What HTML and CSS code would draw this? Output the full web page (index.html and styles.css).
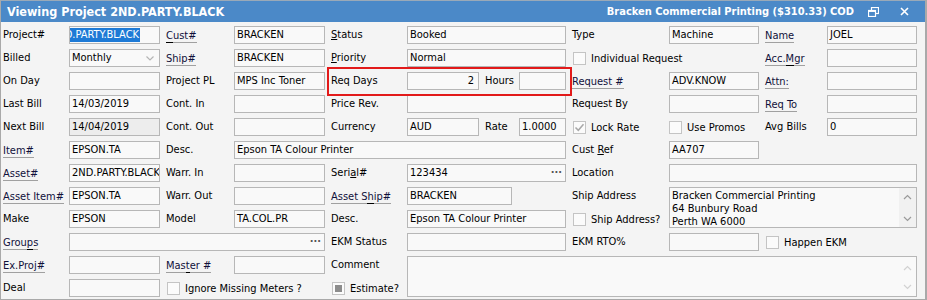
FILE: index.html
```html
<!DOCTYPE html>
<html>
<head>
<meta charset="utf-8">
<link rel="stylesheet" href="styles.css">
</head>
<body>
<div class="win">
  <div class="titlebar">
    <span class="title">Viewing Project 2ND.PARTY.BLACK</span>
    <span class="spacer"></span>
    <span class="title2">Bracken Commercial Printing ($310.33) COD</span>
    <span class="tbtn restore"><svg width="11" height="10" viewBox="0 0 11 10"><rect x="3.5" y="0.5" width="7" height="6" fill="none" stroke="#fff" stroke-width="1.2"/><rect x="0.5" y="3.5" width="7" height="6" fill="#4b89c8" stroke="#fff" stroke-width="1.2"/><line x1="0.5" y1="4.2" x2="7.5" y2="4.2" stroke="#fff" stroke-width="1.5"/></svg></span>
    <span class="tbtn close"><svg width="9" height="9" viewBox="0 0 9 9"><path d="M1 1L8 8M8 1L1 8" stroke="#fff" stroke-width="1.6"/></svg></span>
  </div>
  <div class="form">
    <!-- row 1 -->
    <div class="lb c1">Project#</div>
    <div class="f"><span class="sel">2ND.PARTY.BLACK</span></div>
    <div class="lb"><span class="lnk"><u class="ak">C</u>ust#</span></div>
    <div class="f">BRACKEN</div>
    <div class="lb"><u class="ak">S</u>tatus</div>
    <div class="f">Booked</div>
    <div class="lb">Type</div>
    <div class="f">Machine</div>
    <div class="lb"><span class="lnk">Name</span></div>
    <div class="f">JOEL</div>
    <!-- row 2 -->
    <div class="lb c1">Billed</div>
    <div class="f dd">Monthly<svg class="chev" width="8" height="5" viewBox="0 0 8 5"><path d="M0.5 0.5L4 4L7.5 0.5" fill="none" stroke="#b5b5b5" stroke-width="1.2"/></svg></div>
    <div class="lb"><span class="lnk">Ship#</span></div>
    <div class="f">BRACKEN</div>
    <div class="lb"><u class="ak">P</u>riority</div>
    <div class="f">Normal</div>
    <div class="chk s2"><span class="box"></span>Individual Request</div>
    <div class="lb"><span class="lnk">Acc.<u class="ak">M</u>gr</span></div>
    <div class="f"></div>
    <!-- row 3 -->
    <div class="lb c1">On Day</div>
    <div class="f"></div>
    <div class="lb">Project PL</div>
    <div class="f">MPS Inc Toner</div>
    <div class="lb">Req Days</div>
    <div class="combo">
      <div class="f w72 num">2</div>
      <div class="sub">Hours</div>
      <div class="f grow"></div>
    </div>
    <div class="lb"><span class="lnk">Request #</span></div>
    <div class="f">ADV.KNOW</div>
    <div class="lb"><span class="lnk">Attn:</span></div>
    <div class="f"></div>
    <!-- row 4 -->
    <div class="lb c1">Last Bill</div>
    <div class="f">14/03/2019</div>
    <div class="lb">Cont. In</div>
    <div class="f"></div>
    <div class="lb">Price Rev.</div>
    <div class="f"></div>
    <div class="lb">Request By</div>
    <div class="f"></div>
    <div class="lb"><span class="lnk">Req To</span></div>
    <div class="f"></div>
    <!-- row 5 -->
    <div class="lb c1">Next Bill</div>
    <div class="f ro">14/04/2019</div>
    <div class="lb">Cont. Out</div>
    <div class="f"></div>
    <div class="lb">Currency</div>
    <div class="combo">
      <div class="f w72">AUD</div>
      <div class="sub">Rate</div>
      <div class="f grow">1.0000</div>
    </div>
    <div class="chk"><span class="box"><svg width="11" height="11" viewBox="0 0 11 11"><path d="M1.5 5.5L4.3 8.3L9.5 2.3" fill="none" stroke="#a8a8a8" stroke-width="1.5"/></svg></span>Lock Rate</div>
    <div class="chk p0"><span class="box"></span>Use Promos</div>
    <div class="lb">Avg Bills</div>
    <div class="f">0</div>
    <!-- row 6 -->
    <div class="lb c1"><span class="lnk">Item#</span></div>
    <div class="f">EPSON.TA</div>
    <div class="lb">Desc.</div>
    <div class="f s3">Epson TA Colour Printer</div>
    <div class="lb">Cust <u class="ak">R</u>ef</div>
    <div class="f">AA707</div>
    <!-- row 7 -->
    <div class="lb c1"><span class="lnk">Asset#</span></div>
    <div class="f">2ND.PARTY.BLACK</div>
    <div class="lb">Warr. In</div>
    <div class="f"></div>
    <div class="lb">Seri<u class="ak">a</u>l#</div>
    <div class="f ell">123434<span class="dots">&middot;&middot;&middot;</span></div>
    <div class="lb">Location</div>
    <div class="f s3"></div>
    <!-- row 8 -->
    <div class="lb c1"><span class="lnk">Asset Item#</span></div>
    <div class="f">EPSON.TA</div>
    <div class="lb">Warr. Out</div>
    <div class="f"></div>
    <div class="lb"><span class="lnk">Asset S<u class="ak">h</u>ip#</span></div>
    <div class="short"><div class="f">BRACKEN</div></div>
    <div class="lb">Ship Address</div>
    <div class="f ta s3 r2">
      <div class="tatext">Bracken Commercial Printing<br>64 Bunbury Road<br>Perth WA 6000</div>
      <div class="sb">
        <svg width="9" height="6" viewBox="0 0 9 6"><path d="M1 5L4.5 1.5L8 5" fill="none" stroke="#9a9a9a" stroke-width="1.2"/></svg>
        <svg width="9" height="6" viewBox="0 0 9 6"><path d="M1 1L4.5 4.5L8 1" fill="none" stroke="#9a9a9a" stroke-width="1.2"/></svg>
      </div>
    </div>
    <!-- row 9 -->
    <div class="lb c1">Make</div>
    <div class="f">EPSON</div>
    <div class="lb">Model</div>
    <div class="f">TA.COL.PR</div>
    <div class="lb">Desc.</div>
    <div class="f">Epson TA Colour Printer</div>
    <div class="chk"><span class="box"></span>Ship Address?</div>
    <!-- row 10 -->
    <div class="lb c1"><span class="lnk">Grou<u class="ak">p</u>s</span></div>
    <div class="f s3 ell"><span class="dots">&middot;&middot;&middot;</span></div>
    <div class="lb">EKM Status</div>
    <div class="f"></div>
    <div class="lb">EKM RTO%</div>
    <div class="f"></div>
    <div class="chk s2"><span class="box"></span>Happen EKM</div>
    <!-- row 11 -->
    <div class="lb c1"><span class="lnk">Ex.Proj#</span></div>
    <div class="f"></div>
    <div class="lb"><span class="lnk">Mas<u class="ak">t</u>er #</span></div>
    <div class="f"></div>
    <div class="lb">Comment</div>
    <div class="f ta s5 r2">
      <div class="tatext"></div>
      <div class="sb dis">
        <svg width="9" height="6" viewBox="0 0 9 6"><path d="M1 5L4.5 1.5L8 5" fill="none" stroke="#d2d2d2" stroke-width="1.2"/></svg>
        <svg width="9" height="6" viewBox="0 0 9 6"><path d="M1 1L4.5 4.5L8 1" fill="none" stroke="#d2d2d2" stroke-width="1.2"/></svg>
      </div>
    </div>
    <!-- row 12 -->
    <div class="lb c1">Deal</div>
    <div class="f"></div>
    <div class="chk s2"><span class="box"></span>Ignore Missing Meters ?</div>
    <div class="chk"><span class="box ind"></span>Estimate?</div>
  </div>
  <div class="redbox"></div>
</div>
</body>
</html>
```
FILE: styles.css
```css
* { box-sizing: border-box; }
html, body { margin: 0; padding: 0; background: #ffffff; }
body {
  font-family: "DejaVu Sans Condensed", "DejaVu Sans", sans-serif;
  font-stretch: condensed;
  font-size: 11px;
  color: #000;
}
.win {
  position: relative;
  width: 927px;
  height: 300px;
  background: #f4f4f4;
  border-left: 1px solid #a9a9a9;
  border-right: 2px solid #a9a9a9;
  border-bottom: 1px solid #a9a9a9;
  overflow: hidden;
}
.titlebar {
  height: 22px;
  border-top: 1px solid #9aa9b8;
  background: #4b89c8;
  color: #fff;
  font-weight: bold;
  display: flex;
  align-items: center;
  padding-left: 6px;
  padding-right: 16px;
}
.title { font-size: 12.5px; }
.title2 { font-size: 11px; }
.spacer { flex: 1; }
.tbtn { display: flex; align-items: center; }
.restore { margin-left: 14px; }
.close { margin-left: 21px; }
.form {
  display: grid;
  grid-template-columns: 66px 91px 74px 91px 82px 159px 103px 90px 68px 90px;
  grid-auto-rows: 18px;
  row-gap: 5px;
  padding: 4px 0 0 2px;
}
.lb {
  padding-left: 6px;
  line-height: 18px;
  white-space: nowrap;
}
.c1 { grid-column-start: 1; padding-left: 0; }
.lnk {
  display: inline-block;
  line-height: 13px;
  margin-top: 3px;
  border-bottom: 1px solid #a0a0a0;
  color: #10103a;
}
u.ak { text-decoration: underline; text-decoration-color: #000; text-underline-offset: 1px; }
.lnk u.ak { text-decoration: none; border-bottom: 1px solid #000; margin-bottom: -1px; display: inline-block; line-height: 13px; }
.f {
  border: 1px solid #b7b7b7;
  background: #f9f9f9;
  height: 18px;
  line-height: 16px;
  padding: 0 2px 0 2px;
  white-space: nowrap;
  overflow: hidden;
  position: relative;
}
.ro { background: #ededed; }
.sel {
  display: inline-block;
  margin-left: -21px;
  background: #1e7ad6;
  color: #fff;
  line-height: 14px;
  padding-right: 1px;
}
.dd { display: flex; align-items: center; justify-content: space-between; padding-right: 5px; }
.chev { margin-top: 1px; }
.combo { display: flex; align-items: stretch; }
.w72 { width: 72px; }
.num { text-align: right; padding-right: 4px; }
.sub { width: 40px; padding-left: 6px; line-height: 18px; }
.grow { flex: 1; }
.short { display: flex; }
.short .f { width: 105px; }
.s2 { grid-column: span 2; }
.s3 { grid-column: span 3; }
.s5 { grid-column: span 5; }
.r2 { grid-row: span 2; height: auto; }
.ell { display: flex; justify-content: space-between; }
.dots { color: #555; letter-spacing: 0px; font-weight: bold; margin-right: 1px; }
.s3.ell { justify-content: flex-end; }
.chk {
  display: flex;
  align-items: center;
  gap: 5px;
  padding-left: 7px;
  white-space: nowrap;
}
.chk.p0 { padding-left: 0; }
.box {
  width: 13px;
  height: 13px;
  border: 1px solid #c4c4c4;
  background: #fbfbfb;
  display: flex;
  align-items: center;
  justify-content: center;
  flex: none;
}
.box.ind::after {
  content: "";
  width: 7px;
  height: 7px;
  background: #8c8c8c;
}
.ta { display: flex; padding: 0; }
.tatext { flex: 1; padding: 1px 2px; line-height: 13px; }
.sb {
  width: 17px;
  background: #f1f1f1;
  display: flex;
  flex-direction: column;
  justify-content: space-between;
  align-items: center;
  padding: 6px 0 5px;
}
.sb.dis { background: #f9f9f9; padding: 8px 0 6px; }
.redbox {
  position: absolute;
  left: 326px;
  top: 67px;
  width: 245px;
  height: 29px;
  border: 2px solid #e21a1a;
}
```
